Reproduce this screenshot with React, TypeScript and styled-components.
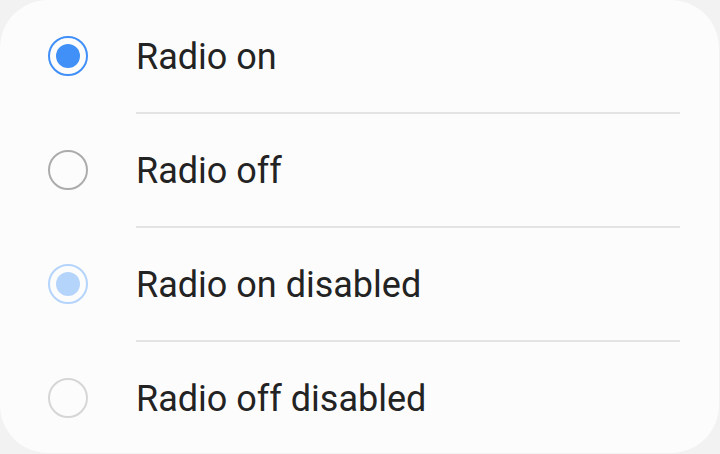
import styled, { createGlobalStyle } from "styled-components"

const GlobalStyle = createGlobalStyle`
  html, body {
    margin: 0;
    padding: 0;
    background: #f2f2f2;
  }
`

const StyledCard = styled.div`
  width: 719px;
  height: 453px;
  background: #fcfcfc;
  border-radius: 48px;
  overflow: hidden;
  display: flex;
  flex-direction: column;
`

const StyledRow = styled.div`
  height: 112px;
  display: flex;
  align-items: center;
  padding-left: 48px;
  gap: 48px;
  flex-shrink: 0;
`

const StyledDivider = styled.div`
  height: 2px;
  background: #e3e3e3;
  margin: 0 39px 0 136px;
  flex-shrink: 0;
`

const StyledRadio = styled.div<{ $ring: string; $dot?: string }>`
  width: 40px;
  height: 40px;
  box-sizing: border-box;
  border-radius: 50%;
  border: 2px solid ${p => p.$ring};
  display: flex;
  align-items: center;
  justify-content: center;
  flex-shrink: 0;
  &::after{
    content: "";
    display: ${p => (p.$dot ? "block" : "none")};
    width: 24px;
    height: 24px;
    border-radius: 50%;
    background: ${p => p.$dot};
  }
`

const StyledLabel = styled.span`
  font-family: Roboto, "Noto Sans", sans-serif;
  font-size: 36px;
  color: #232323;
  line-height: 1;
  padding-top: 1px;
`

const items = [
  { label: "Radio on", ring: "#4190f7", dot: "#4190f7" },
  { label: "Radio off", ring: "#acacac" },
  { label: "Radio on disabled", ring: "#b5d4fb", dot: "#b5d4fb" },
  { label: "Radio off disabled", ring: "#d6d6d6" },
]

export default function App(){
  return <>
    <GlobalStyle />
    <StyledCard>
      {items.map((item, i) => (
        <div key={item.label} style={{ display: "contents" }}>
          {i > 0 && <StyledDivider />}
          <StyledRow>
            <StyledRadio $ring={item.ring} $dot={item.dot} />
            <StyledLabel>{item.label}</StyledLabel>
          </StyledRow>
        </div>
      ))}
    </StyledCard>
  </>
}
